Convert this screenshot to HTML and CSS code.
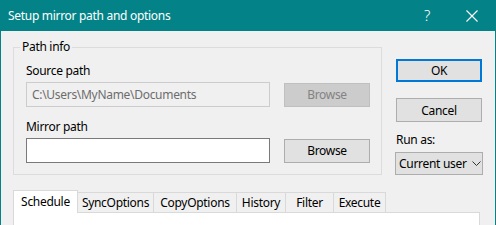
FILE: index.html
```html
<!DOCTYPE html>
<html>
<head>
<meta charset="utf-8">
<link rel="stylesheet" href="styles.css">
</head>
<body>
<div class="window">
  <div class="titlebar">
    <span class="title">Setup mirror path and options</span>
    <span class="help">?</span>
    <svg class="close" width="12" height="12" viewBox="0 0 12 12"><path d="M0.5 0.5 L11.5 11.5 M11.5 0.5 L0.5 11.5" stroke="#fff" stroke-width="1.1" fill="none"/></svg>
  </div>
  <div class="content">
    <div class="main">
      <fieldset class="group">
        <legend class="legend">Path info</legend>
        <div class="label">Source path</div>
        <div class="row">
          <div class="textbox disabled">C:\Users\MyName\Documents</div>
          <div class="btn btn-disabled">Browse</div>
        </div>
        <div class="label label-mirror">Mirror path</div>
        <div class="row">
          <div class="textbox"></div>
          <div class="btn">Browse</div>
        </div>
      </fieldset>
      <div class="side">
        <div class="btn btn-default">OK</div>
        <div class="btn btn-cancel">Cancel</div>
        <div class="runas">Run as:</div>
        <div class="combo"><span class="combo-text">Current user</span><svg class="chev" width="9" height="5" viewBox="0 0 9 5"><path d="M0.5 0.5 L4.5 4.5 L8.5 0.5" stroke="#333" stroke-width="1" fill="none"/></svg></div>
      </div>
    </div>
    <div class="tabs">
      <div class="tab active w-schedule">Schedule</div>
      <div class="tab w-sync">SyncOptions</div>
      <div class="tab w-copy">CopyOptions</div>
      <div class="tab w-history">History</div>
      <div class="tab w-filter">Filter</div>
      <div class="tab w-exec">Execute</div>
    </div>
    <div class="panel"></div>
  </div>
</div>
</body>
</html>
```
FILE: styles.css
```css
* { box-sizing: border-box; }
html, body { margin: 0; padding: 0; }
body {
  width: 496px;
  height: 225px;
  overflow: hidden;
  background: #f0f0f0;
  font-family: "Noto Sans", "Liberation Sans", sans-serif;
  font-size: 12px;
  letter-spacing: -0.3px;
  color: #000;
}
.window {
  width: 496px;
  height: 225px;
  border-left: 1px solid #038387;
  border-right: 1px solid #038387;
  display: flex;
  flex-direction: column;
}
.titlebar {
  height: 31px;
  background: #038387;
  color: #fff;
  display: flex;
  align-items: center;
  padding-left: 8px;
  margin: 0 -1px;
  flex: none;
}
.title { font-size: 12px; flex: 1; }
.help { font-size: 15px; font-weight: 300; margin-right: 36px; line-height: 1; }
.close { margin-right: 18px; }
.content { flex: 1; padding: 8px 0 0 12px; }
.main { display: flex; }
.group {
  margin: 0;
  width: 369px;
  height: 136px;
  border: 1px solid #dcdcdc;
  padding: 0 11px 0 12px;
}
.legend { padding: 0 2px; margin-left: -6px; line-height: 16px; }
.label { line-height: 16px; margin-top: 8px; }
.label-mirror { margin-top: 12px; }
.row { display: flex; align-items: center; margin-top: 3px; }
.textbox {
  width: 244px;
  height: 25px;
  border: 1px solid #7a7a7a;
  background: #fff;
  padding-left: 5px;
  line-height: 23px;
  margin-right: 14px;
}
.textbox.disabled { background: #f0f0f0; border-color: #cccccc; color: #6d6d6d; }
.btn {
  width: 86px;
  height: 24px;
  border: 1px solid #adadad;
  background: #e1e1e1;
  display: flex;
  align-items: center;
  justify-content: center;
}
.btn-disabled { background: #cccccc; border-color: #bfbfbf; color: #838383; }
.side { display: flex; flex-direction: column; margin-left: 14px; padding-top: 20px; }
.btn-default { border: 2px solid #0078d7; height: 23px; }
.btn-cancel { margin-top: 16px; }
.runas { line-height: 16px; margin-top: 10px; }
.combo {
  margin-top: 4px;
  margin-left: -1px;
  width: 88px;
  height: 23px;
  border: 1px solid #adadad;
  background: #e1e1e1;
  display: flex;
  align-items: center;
  padding-left: 3px;
  overflow: hidden;
}
.combo-text { width: 69px; overflow: hidden; white-space: nowrap; flex: none; }
.chev { margin-left: 4px; flex: none; }
.tabs { display: flex; align-items: flex-end; margin-top: 15px; height: 22px; }
.tab {
  height: 20px;
  border: 1px solid #d9d9d9;
  border-bottom: none;
  border-left: none;
  background: #f0f0f0;
  display: flex;
  align-items: center;
  justify-content: center;
  line-height: 16px;
}
.tab.active {
  height: 23px;
  margin-bottom: -1px;
  background: #fff;
  border-left: 1px solid #d9d9d9;
  position: relative;
  z-index: 1;
}
.w-schedule { width: 65px; }
.w-sync { width: 76px; }
.w-copy { width: 83px; }
.w-history { width: 49px; }
.w-filter { width: 48px; }
.w-exec { width: 52px; }
.panel {
  width: 467px;
  height: 20px;
  background: #fff;
  border: 1px solid #d9d9d9;
}
```
